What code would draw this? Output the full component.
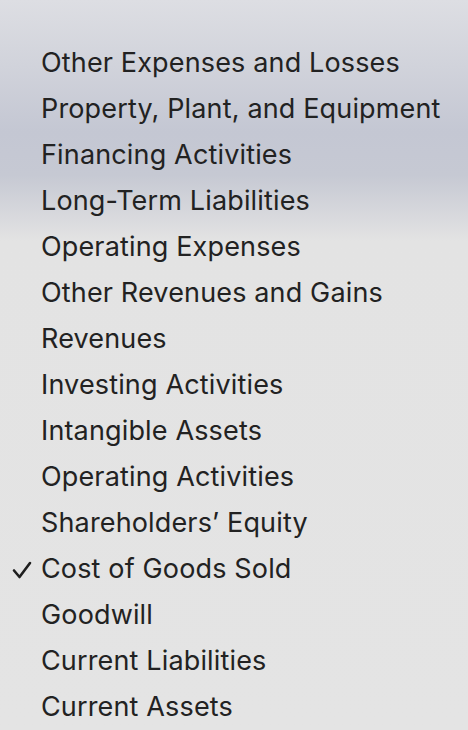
const ITEMS = [
  "Other Expenses and Losses",
  "Property, Plant, and Equipment",
  "Financing Activities",
  "Long-Term Liabilities",
  "Operating Expenses",
  "Other Revenues and Gains",
  "Revenues",
  "Investing Activities",
  "Intangible Assets",
  "Operating Activities",
  "Shareholders’ Equity",
  "Cost of Goods Sold",
  "Goodwill",
  "Current Liabilities",
  "Current Assets",
];

const SELECTED = "Cost of Goods Sold";

function Check() {
  return (
    <svg width="20" height="18" viewBox="0 0 20 18" className="absolute left-[12px] top-[15px]">
      <path d="M2 9.5 L7.5 16 L18 2" fill="none" stroke="#1f1f1f" strokeWidth="2.6" strokeLinecap="round" strokeLinejoin="round" />
    </svg>
  );
}

export default function App() {
  return (
    <div
      className="w-[468px] h-[730px] overflow-hidden bg-[linear-gradient(180deg,#dddee3_0%,#d1d3db_9%,#c4c7d3_18%,#c6c9d3_24%,#d6d7dc_29%,#e3e3e3_33%,#e4e4e4_100%)] pt-[40px] text-[#222222]"
      style={{ fontFamily: "Inter, 'Noto Sans', sans-serif" }}
    >
      {ITEMS.map((item) => (
        <div key={item} className="relative h-[46px] pl-[41px] text-[27px] leading-[46px] tracking-[0.15px] whitespace-nowrap">
          {item === SELECTED && <Check />}
          {item}
        </div>
      ))}
    </div>
  );
}
